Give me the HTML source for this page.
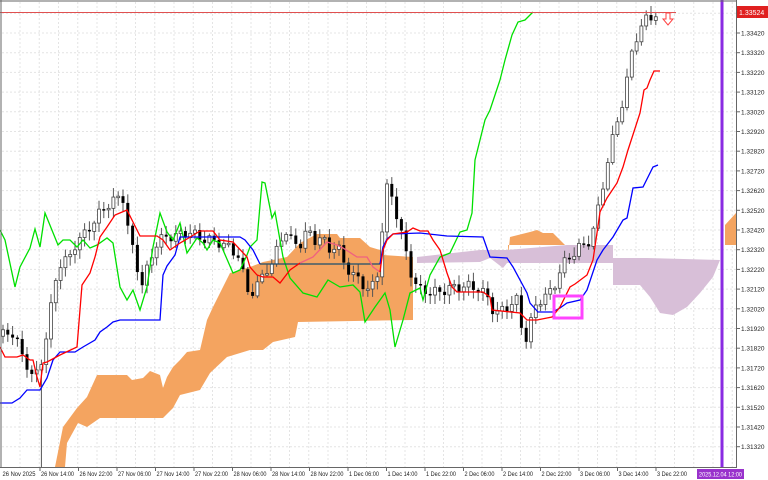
<!DOCTYPE html>
<html><head><meta charset="utf-8"><style>
html,body{margin:0;padding:0;background:#fff;width:768px;height:480px;overflow:hidden}
svg{display:block}
text{font-family:"Liberation Sans",sans-serif;font-size:7px;fill:#222}
</style></head><body>
<svg id="s" width="768" height="480" viewBox="0 0 768 480" xmlns="http://www.w3.org/2000/svg">
<rect width="768" height="480" fill="#fff"/>
<g id="grid" stroke="#e4e4e4" stroke-width="1" stroke-dasharray="2,2"></g>
<polygon fill="#f4a460" points="55,467 63,427 77,408 87,397 97,375 127,375 132,380 143,378 150,371 160,375 163,388 167,377 173,367 180,360 187,352 200,350 207,320 213,307 230,273 250,267 263,262 287,257 300,243 317,234 337,234 340,238 360,238 370,247 380,250 383,255 413,257 413,320 298,322 295,337 273,342 263,350 250,350 227,357 210,373 200,390 180,395 173,408 163,418 100,418 87,427 78,423 67,443 65,467"/>
<polygon fill="#f4a460" points="508,257 510,237 530,232 537,230 543,233 553,233 563,243 565,245 508,245"/>
<polygon fill="#f4a460" points="725,245 725,225 736,213 736,245"/>
<polygon fill="#d8bfd8" points="417,257 480,250 507,250 567,245 613,245 613,258 647,258 720,260 713,277 700,293 687,307 673,315 660,313 650,297 640,285 613,285 613,263 507,263 503,268 490,258 480,262 417,263"/>
<g id="candles"></g>
<polyline fill="none" stroke="#00e000" stroke-width="1.3" points="0,230 5,240 15,287 20,267 30,248 35,229 40,247 45,213 58,245 63,240 70,240 77,247 83,240 90,248 97,245 107,238 113,243 120,287 127,300 133,290 140,310 147,287 153,247 160,213 167,232 173,240 180,223 187,253 197,238 203,243 207,250 213,240 220,243 233,273 240,270 247,255 250,247 257,240 262,182 265,183 272,218 275,212 283,257 290,278 303,293 317,297 328,280 340,287 353,285 360,292 365,322 375,307 385,293 390,310 395,347 403,320 410,293 420,288 423,300 430,275 440,257 450,253 460,232 467,230 472,213 475,160 485,120 490,110 500,80 505,60 512,35 518,22 525,20 533,12"/>
<polyline fill="none" stroke="#0000ff" stroke-width="1.3" points="0,403 12,403 20,398 27,390 40,390 47,378 53,360 60,352 75,352 83,347 95,340 100,332 107,327 113,322 120,320 160,320 163,275 167,266 175,255 180,237 240,237 245,240 253,250 260,264"/>
<polyline fill="none" stroke="#1a4d6e" stroke-width="1.3" points="260,264 380,264"/>
<polyline fill="none" stroke="#0000ff" stroke-width="1.3" points="380,264 383,247 387,239 393,234 420,233 447,236 483,237 490,257 507,258 513,267 527,293 530,303 538,312 553,312 560,308 567,303 580,300 587,290 597,260 603,250 613,237 623,220 627,218 633,188 643,187 653,167 658,165"/>
<polyline fill="none" stroke="#ff0000" stroke-width="1.3" points="0,347 5,357 17,357 23,355 30,360 33,360 37,377 40,387 43,363 47,362 60,355 77,347 82,285 90,273 95,257 100,237 107,227 115,215 127,210 133,222 140,236 157,236 163,240 170,250 180,243 187,239 200,231 213,231 220,240 233,242 247,257 250,267 257,275 263,277 273,277 280,283 290,270 300,263"/>
<polyline fill="none" stroke="#f06080" stroke-width="1.3" points="300,263 313,257 327,242 337,245 343,248 357,257 367,257 373,267 380,272"/>
<polyline fill="none" stroke="#ff0000" stroke-width="1.3" points="380,272 383,250 387,240 393,234 407,232 413,228 420,231 428,231 433,240 440,250 447,273 452,287 457,292 483,292 490,297 492,310 520,313 527,320 537,320 547,318 552,317 560,307 570,287 575,284 587,275 593,260 597,233 600,212 607,198 617,183 623,167 628,150 640,113 644,90 647,88 650,80 654,71 660,71"/>
<line x1="0" y1="12.5" x2="676" y2="12.5" stroke="#e05050" stroke-width="1"/>
<path d="M666,13 h4 v6 h3 l-5,6 l-5,-6 h3 z" fill="#fff" stroke="#ff4040" stroke-width="1"/>
<rect x="554" y="296" width="28" height="22" fill="none" stroke="#ff44ff" stroke-width="3"/>
<rect x="720.5" y="0" width="3" height="467" fill="#8a2be2"/>
<line x1="1" y1="0" x2="1" y2="467" stroke="#666"/>
<line x1="0" y1="1" x2="736" y2="1" stroke="#666"/>
<line x1="736.5" y1="0" x2="736.5" y2="468" stroke="#666"/>
<line x1="0" y1="467.5" x2="737" y2="467.5" stroke="#666"/>
<g id="axis"></g>
<rect x="737" y="6" width="31" height="12" fill="#e02020"/>
<text x="739" y="15" style="fill:#fff">1.33524</text>
<rect x="697" y="469" width="47" height="10" fill="#9932cc"/>
<text x="699" y="476.5" style="fill:#fff;font-size:6px" textLength="43" lengthAdjust="spacingAndGlyphs">2025.12.04 12:00</text>
</svg>
<script>
(function(){
var NS="http://www.w3.org/2000/svg";
function el(p,t,a){var e=document.createElementNS(NS,t);for(var k in a)e.setAttribute(k,a[k]);p.appendChild(e);return e;}
var grid=document.getElementById('grid'),axis=document.getElementById('axis');
for(var x=20;x<736;x+=19.25){el(grid,'line',{x1:x,y1:2,x2:x,y2:467});}
for(var k=-1;k<=21;k++){var y=33+k*19.7;if(y<2||y>466)continue;el(grid,'line',{x1:2,y1:y,x2:736,y2:y});
 if(k>=0){el(axis,'line',{x1:736,y1:y,x2:740,y2:y,stroke:'#666'});var t=el(axis,'text',{x:741,y:y+2.5,style:'font-size:6.5px'});t.textContent=(1.3342-k*0.001).toFixed(5);}}
var labs=["26 Nov 2025","26 Nov 14:00","26 Nov 22:00","27 Nov 06:00","27 Nov 14:00","27 Nov 22:00","28 Nov 06:00","28 Nov 14:00","28 Nov 22:00","1 Dec 06:00","1 Dec 14:00","1 Dec 22:00","2 Dec 06:00","2 Dec 14:00","2 Dec 22:00","3 Dec 06:00","3 Dec 14:00","3 Dec 22:00"];
for(var i=0;i<labs.length;i++){var lx=1.5+i*38.5;if(i>0)el(axis,'line',{x1:lx,y1:467,x2:lx,y2:471,stroke:'#666'});
 var w=labs[i].indexOf('Dec')>0?30:33;
 var t=el(axis,'text',{x:lx+1,y:476,style:'font-size:6px',textLength:w,lengthAdjust:'spacingAndGlyphs'});t.textContent=labs[i];}
var kp=[[2,335],[10,330],[18,345],[25,360],[33,380],[38,370],[43,355],[48,330],[52,300],[55,280],[60,265],[65,262],[70,255],[75,245],[80,240],[88,228],[95,222],[100,212],[105,205],[110,205],[115,200],[120,195],[125,200],[128,230],[133,250],[138,270],[142,285],[147,270],[152,255],[158,240],[165,238],[172,236],[180,235],[190,232],[200,238],[210,240],[220,243],[230,248],[240,258],[245,285],[250,295],[258,285],[265,270],[272,265],[280,240],[285,230],[290,240],[300,245],[308,230],[315,240],[322,238],[330,250],[337,245],[345,265],[352,275],[360,280],[367,290],[374,285],[380,265],[384,200],[388,185],[393,200],[398,220],[403,240],[408,262],[413,280],[420,290],[430,292],[440,292],[450,288],[460,287],[470,286],[480,290],[488,298],[495,315],[502,310],[510,305],[517,300],[523,335],[528,340],[533,310],[540,300],[547,295],[553,290],[558,275],[565,262],[572,255],[578,248],[585,245],[590,240],[595,225],[600,200],[605,175],[610,150],[615,130],[620,110],[625,95],[630,60],[635,40],[640,30],[645,20],[650,17],[655,15],[659,14]];
function interp(x){for(var i=1;i<kp.length;i++){if(x<=kp[i][0]){var a=kp[i-1],b=kp[i];return a[1]+(b[1]-a[1])*(x-a[0])/(b[0]-a[0]);}}return kp[kp.length-1][1];}
var g=document.getElementById('candles');var prev=interp(0);
for(var x=3;x<=659;x+=4.8){var c=interp(x)+Math.sin(x*1.7)*5;var o=prev;prev=c;
 var hi=Math.min(o,c)-2-Math.abs(Math.sin(x*0.9))*7,lo=Math.max(o,c)+2+Math.abs(Math.cos(x*1.3))*7;
 if(Math.abs(x-40)<3)lo=467;
 el(g,'line',{x1:x,y1:hi,x2:x,y2:lo,stroke:'#555','stroke-width':1});
 var top=Math.min(o,c),h=Math.max(Math.abs(o-c),1.5);
 if(c<o)el(g,'rect',{x:x-1.5,y:top,width:3,height:h,fill:'#fff',stroke:'#444','stroke-width':0.8});
 else el(g,'rect',{x:x-1.5,y:top,width:3,height:h,fill:'#000'});}
})();
</script>
</body></html>
